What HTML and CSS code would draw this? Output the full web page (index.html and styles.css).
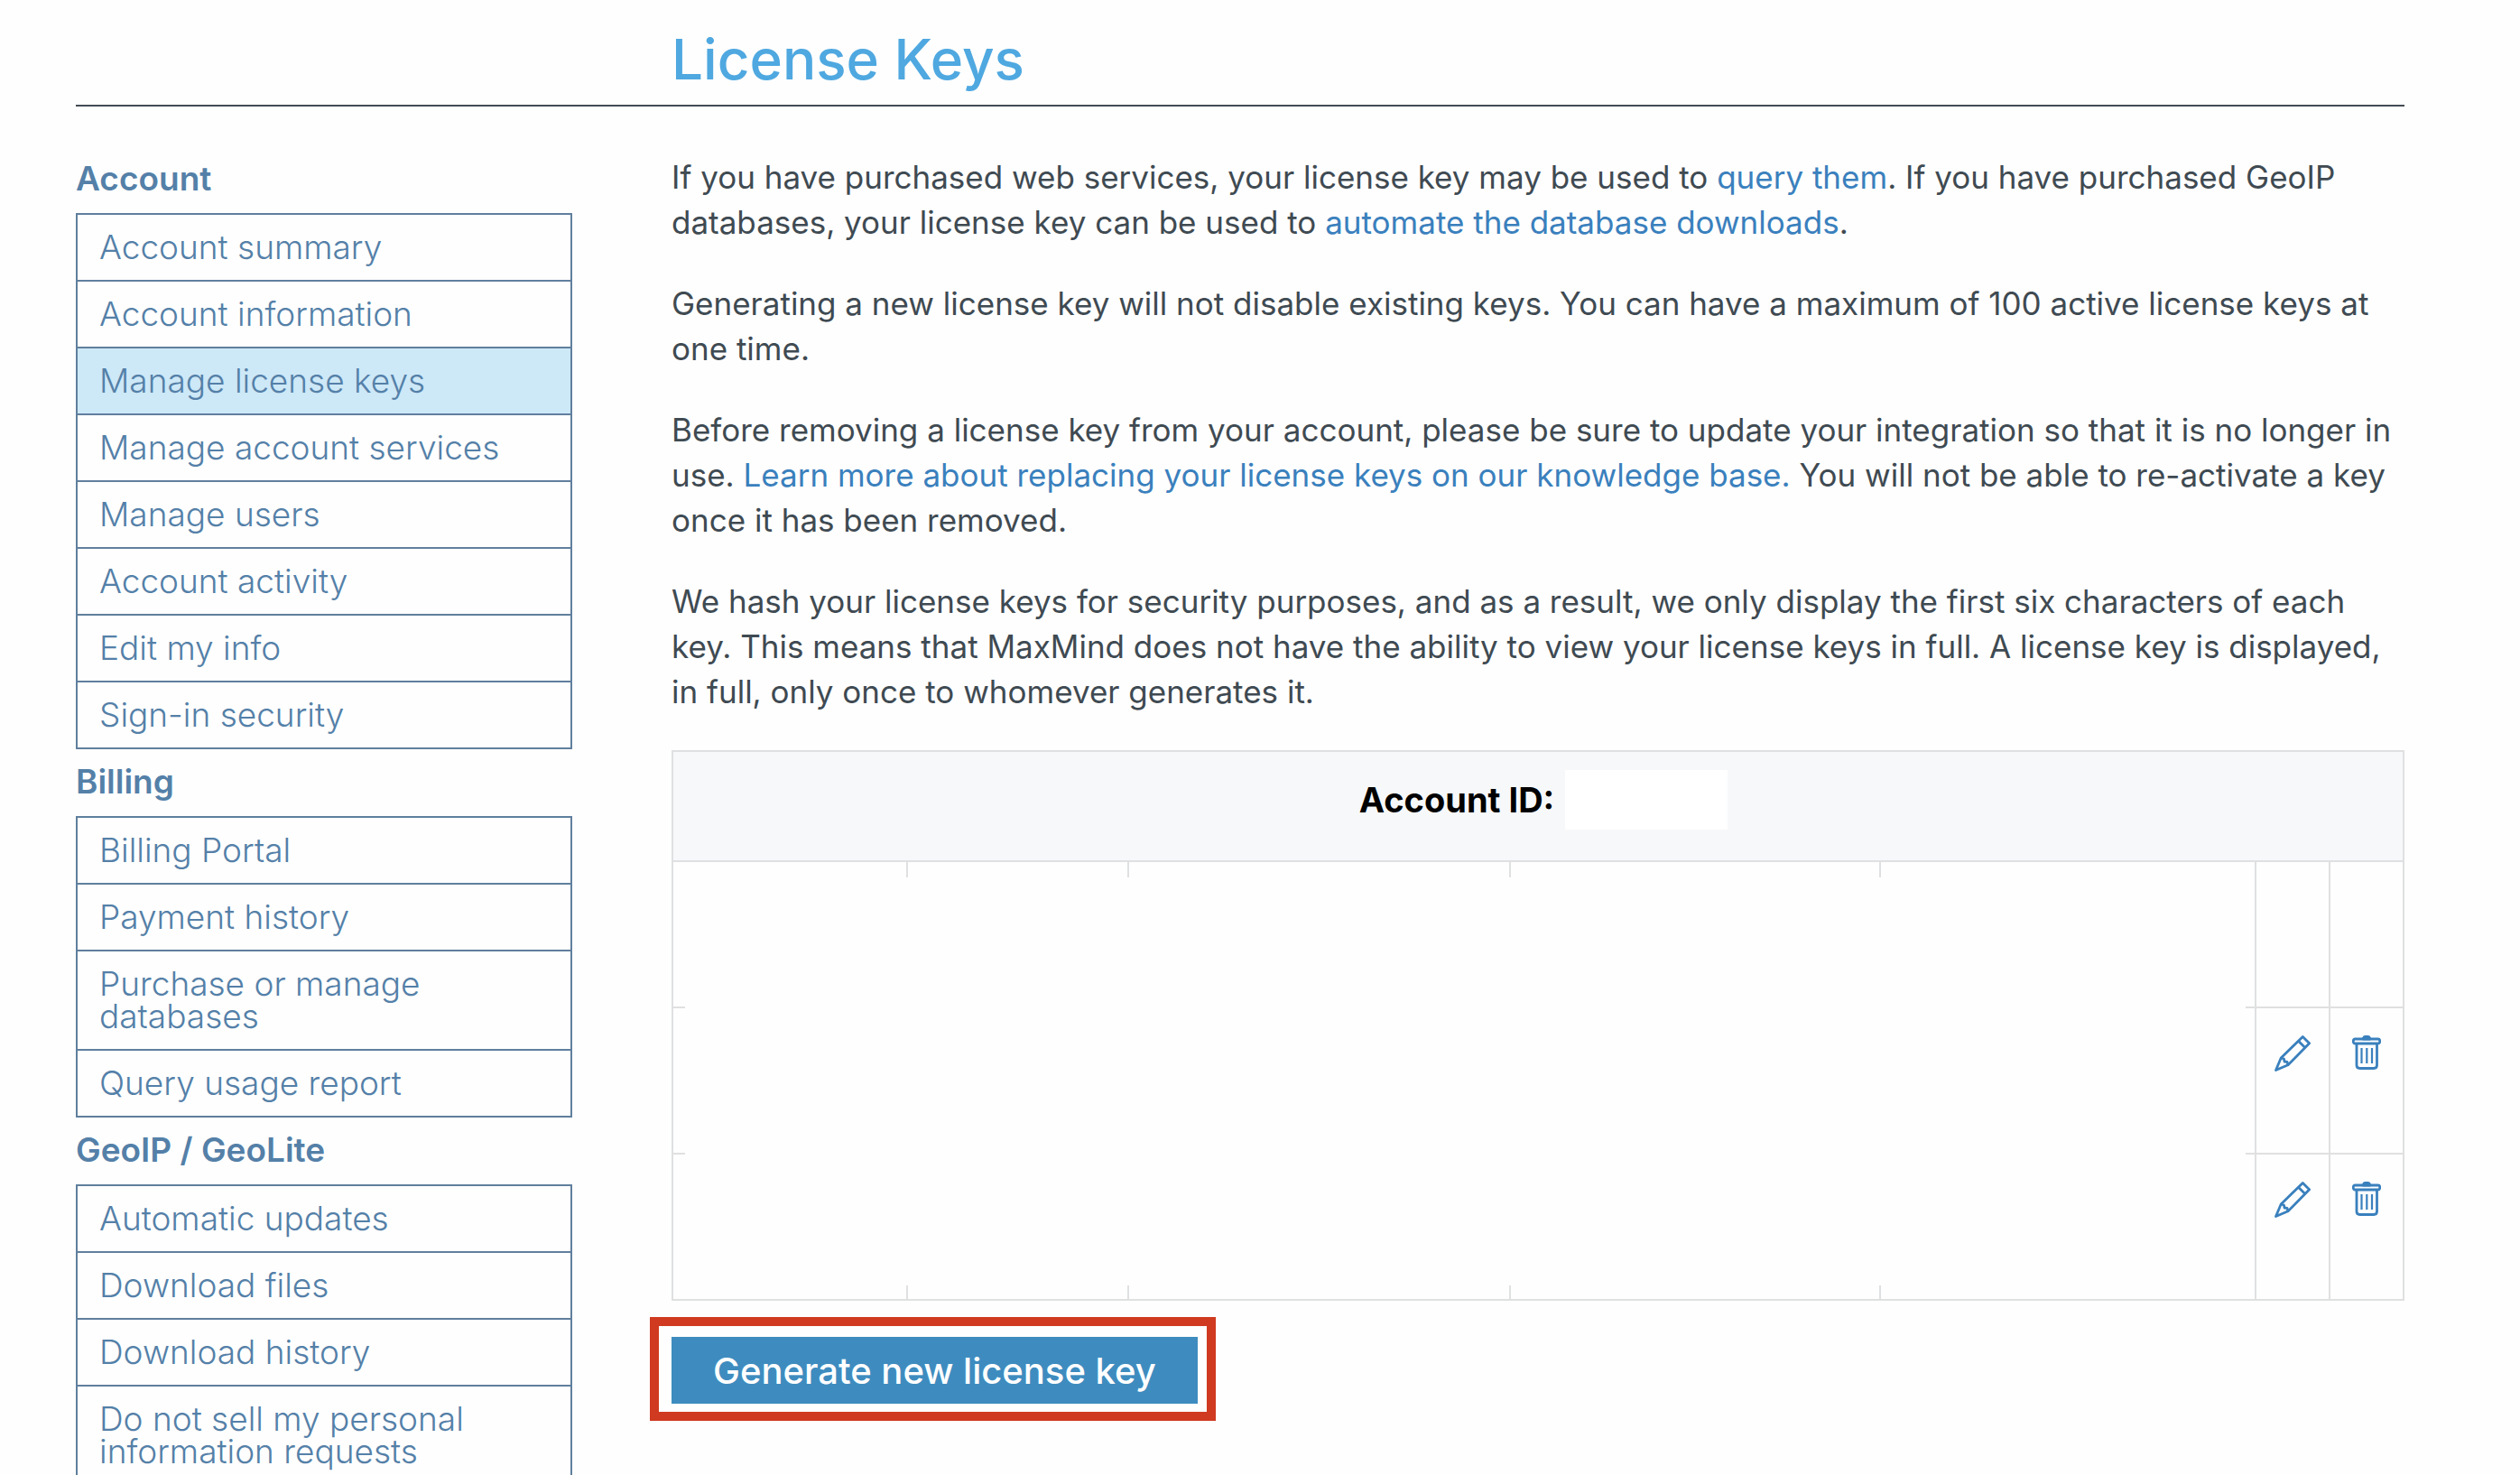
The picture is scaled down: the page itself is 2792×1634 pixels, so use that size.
FILE: index.html
```html
<!DOCTYPE html>
<html lang="en">
<head>
    <meta charset="utf-8" />
    <title>License Keys</title>
    <link rel="stylesheet" href="styles.css">
</head>
<body>
    <svg class="sprite" aria-hidden="true">
        <symbol id="pencil" viewBox="0 0 40 40">
            <path d="M1.5 38.500 L7.200 25 L31.300 1.500 L38.600 8.800 L15 32.800 Z" />
            <path d="M26.500 6.200 L33.800 13.500" />
            <path d="M7.200 25 L10.500 26 L11 29 L14 29.400 L15 32.800" />
        </symbol>
        <symbol id="trash" viewBox="0 0 32 38">
            <rect x="1.300" y="4" width="29.400" height="5" rx="2" />
            <path class="fill" d="M12 4 Q13 1.500 14 1.500 H18 Q19 1.500 20 4 Z" />
            <path d="M5 9 V33 Q5 36.500 8.500 36.500 H24 Q27.500 36.500 27.500 33 V9" />
            <path class="slats" d="M10.500 14 V31 M16.300 14 V31 M22 14 V31" />
        </symbol>
    </svg>

    <header class="page-header">
        <h1>License Keys</h1>
    </header>

    <div class="content">
        <nav class="sidebar">
            <h2>Account</h2>
            <ul>
                <li><a href="#">Account summary</a></li>
                <li><a href="#">Account information</a></li>
                <li class="active"><a href="#">Manage license keys</a></li>
                <li><a href="#">Manage account services</a></li>
                <li><a href="#">Manage users</a></li>
                <li><a href="#">Account activity</a></li>
                <li><a href="#">Edit my info</a></li>
                <li><a href="#">Sign-in security</a></li>
            </ul>
            <h2>Billing</h2>
            <ul>
                <li><a href="#">Billing Portal</a></li>
                <li><a href="#">Payment history</a></li>
                <li><a href="#">Purchase or manage databases</a></li>
                <li><a href="#">Query usage report</a></li>
            </ul>
            <h2>GeoIP / GeoLite</h2>
            <ul>
                <li><a href="#">Automatic updates</a></li>
                <li><a href="#">Download files</a></li>
                <li><a href="#">Download history</a></li>
                <li><a href="#">Do not sell my personal information requests</a></li>
            </ul>
        </nav>

        <main class="main">
            <p>If you have purchased web services, your license key may be used to <a href="#">query them</a>. If you have purchased GeoIP databases, your license key can be used to <a href="#">automate the database downloads</a>.</p>
            <p>Generating a new license key will not disable existing keys. You can have a maximum of 100 active license keys at one time.</p>
            <p>Before removing a license key from your account, please be sure to update your integration so that it is no longer in use. <a href="#">Learn more about replacing your license keys on our knowledge base.</a> You will not be able to re-activate a key once it has been removed.</p>
            <p>We hash your license keys for security purposes, and as a result, we only display the first six characters of each key. This means that MaxMind does not have the ability to view your license keys in full. A license key is displayed, in full, only once to whomever generates it.</p>

            <div class="keys">
                <table>
                    <colgroup>
                        <col class="col-id">
                        <col class="col-key">
                        <col class="col-description">
                        <col class="col-date">
                        <col>
                        <col class="col-action">
                        <col class="col-action">
                    </colgroup>
                    <thead>
                        <tr>
                            <th colspan="7"><div class="account">Account ID: <span class="account-id"></span></div></th>
                        </tr>
                    </thead>
                    <tbody>
                        <tr>
                            <td></td><td></td><td></td><td></td><td></td><td></td><td></td>
                        </tr>
                        <tr>
                            <td></td><td></td><td></td><td></td><td></td>
                            <td><button class="icon" aria-label="Edit"><svg class="pencil"><use href="#pencil" /></svg></button></td>
                            <td><button class="icon" aria-label="Delete"><svg class="trash"><use href="#trash" /></svg></button></td>
                        </tr>
                        <tr>
                            <td></td><td></td><td></td><td></td><td></td>
                            <td><button class="icon" aria-label="Edit"><svg class="pencil"><use href="#pencil" /></svg></button></td>
                            <td><button class="icon" aria-label="Delete"><svg class="trash"><use href="#trash" /></svg></button></td>
                        </tr>
                    </tbody>
                </table>
                <div class="cover"></div>
            </div>

            <div class="highlight">
                <button class="generate">Generate new license key</button>
            </div>
        </main>
    </div>
</body>
</html>
```
FILE: styles.css
```css
* {
    box-sizing: border-box;
}

body {
    margin: 0;
    height: 100vh;
    overflow: hidden;
    padding: 0 128px 0 84px;
    background-color: #FEFEFE;
    color: #3F4A52;
    font-family: Inter, sans-serif;
    font-size: 35px;
    line-height: 50px;
}

a {
    color: #3A80BD;
    text-decoration: none;
}

.sprite {
    position: absolute;
    width: 0;
    height: 0;
}

.page-header {
    height: 118px;
    padding: 30px 0 0 660px;
    border-bottom: 2px solid #434C55;
}

.page-header h1 {
    margin: 0;
    color: #4FA8E0;
    font-size: 62px;
    font-weight: 500;
    line-height: 72px;
}

.content {
    display: flex;
    gap: 110px;
    padding-top: 44px;
}

/* sidebar */
.sidebar {
    flex: 0 0 550px;
    font-size: 37px;
    line-height: 36px;
}

.sidebar h2 {
    margin: 0;
    padding: 18px 0 20px;
    color: #5480A8;
    font-size: 37px;
    font-weight: 600;
    line-height: 36px;
}

.sidebar ul {
    margin: 0;
    padding: 0;
    list-style: none;
    border: 2px solid #607F9D;
}

.sidebar li + li {
    border-top: 2px solid #607F9D;
}

.sidebar li.active {
    background-color: #CDE8F7;
}

.sidebar li a {
    display: block;
    padding: 18px 24px;
    color: #5480A8;
    font-weight: 300;
}

/* main column */
.main {
    flex: 1;
    padding-top: 9px;
}

.main p {
    margin: 0 0 40px;
}

.keys {
    position: relative;
}

.keys table {
    width: 100%;
    table-layout: fixed;
    border-collapse: collapse;
    border: 2px solid #DFE0E1;
}

.keys th {
    height: 122px;
    padding: 0 0 0 12px;
    vertical-align: top;
    border: 2px solid #DFE0E1;
    background-color: #F7F8FA;
    color: #000;
    font-size: 38px;
}

.keys td {
    height: 162px;
    padding: 30px 0 0;
    vertical-align: top;
    border: 2px solid #DFE0E1;
}

.col-id { width: 260px; }
.col-key { width: 245px; }
.col-description { width: 423px; }
.col-date { width: 410px; }
.col-action { width: 82px; }

.account {
    display: flex;
    justify-content: center;
    align-items: center;
    gap: 12px;
    padding-top: 20px;
}

.account-id {
    width: 180px;
    height: 66px;
    background-color: #FFF;
}

.cover {
    position: absolute;
    top: 141px;
    right: 176px;
    bottom: 17px;
    left: 15px;
    background-color: #FEFEFE;
}

.icon {
    display: block;
    margin: 0 auto;
    padding: 0;
    border: 0;
    background: none;
    cursor: pointer;
}

.icon svg {
    display: block;
    fill: none;
    stroke: #3A80BD;
    stroke-width: 2.8;
    stroke-linejoin: round;
}

.fill {
    fill: #3A80BD;
}

.slats {
    stroke-width: 2.2;
}

.pencil {
    width: 40px;
    height: 40px;
}

.trash {
    width: 32px;
    height: 38px;
}

/* call to action */
.highlight {
    display: inline-block;
    margin: 18px 0 0 -24px;
    padding: 12px 10px 9px 14px;
    border: 10px solid #CF3A20;
}

.generate {
    display: block;
    height: 74px;
    padding: 0 46px;
    border: 0;
    background-color: #3E8CBF;
    color: #FFF;
    font-family: inherit;
    font-size: 40px;
    font-weight: 500;
    cursor: pointer;
}
```
